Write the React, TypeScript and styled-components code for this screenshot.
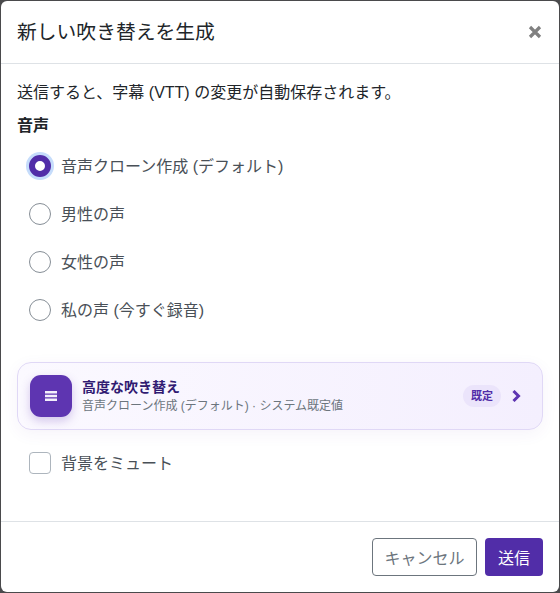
import React, { useState } from 'react';
import styled, { createGlobalStyle } from 'styled-components';

const GlobalStyle = createGlobalStyle`
  html, body {
    margin: 0;
    padding: 0;
    height: 100%;
    background: #4a4a4c;
    overflow: hidden;
  }
  #root {
    height: 100%;
  }
`;

const voices = ['音声クローン作成 (デフォルト)', '男性の声', '女性の声', '私の声 (今すぐ録音)'];

const App = () => {
  const [voice] = useState<number>(0);

  return (
    <>
      <GlobalStyle />
      <Modal>
        <Header>
          <Title>新しい吹き替えを生成</Title>
          <CloseButton aria-label="閉じる">
            <svg width="14" height="14" viewBox="0 0 14 14">
              <path d="M2 2 L12 12 M12 2 L2 12" stroke="#808080" strokeWidth="3.2" />
            </svg>
          </CloseButton>
        </Header>
        <Body>
          <Notice>送信すると、字幕 (VTT) の変更が自動保存されます。</Notice>
          <SectionLabel>音声</SectionLabel>
          <RadioList>
            {voices.map((label, i) => (
              <RadioRow key={label}>
                <RadioMark $checked={voice === i} />
                <OptionText>{label}</OptionText>
              </RadioRow>
            ))}
          </RadioList>
          <AdvancedCard>
            <AdvancedIcon>
              <svg width="12" height="10" viewBox="0 0 12 10">
                <path d="M0 0 H12 V2.4 H0 Z M0 3.8 H12 V6.2 H0 Z M0 7.6 H12 V10 H0 Z" fill="#f3effb" />
              </svg>
            </AdvancedIcon>
            <AdvancedText>
              <AdvancedTitle>高度な吹き替え</AdvancedTitle>
              <AdvancedSub>音声クローン作成 (デフォルト) · システム既定値</AdvancedSub>
            </AdvancedText>
            <DefaultBadge>既定</DefaultBadge>
            <Chevron width="9" height="12" viewBox="0 0 9 12">
              <path d="M1.5 1 L6.5 6 L1.5 11" fill="none" stroke="#5e35b1" strokeWidth="3" />
            </Chevron>
          </AdvancedCard>
          <CheckRow>
            <CheckMark />
            <OptionText>背景をミュート</OptionText>
          </CheckRow>
        </Body>
        <Footer>
          <CancelButton>キャンセル</CancelButton>
          <SubmitButton>送信</SubmitButton>
        </Footer>
      </Modal>
    </>
  );
};

export default App;

const Modal = styled.div`
  box-sizing: border-box;
  height: 591px;
  margin: 1px 1px 0;
  background: #fff;
  border-radius: 6px;
  display: flex;
  flex-direction: column;
  font-family: 'Liberation Sans', 'Noto Sans CJK JP', sans-serif;
  color: #212529;
`;

const Header = styled.div`
  height: 63px;
  flex: none;
  box-sizing: border-box;
  display: flex;
  align-items: center;
  justify-content: space-between;
  padding: 0 16px;
  border-bottom: 1px solid #dee2e6;
`;

const Title = styled.h5`
  margin: 0;
  font-size: 19.8px;
  font-weight: 400;
  line-height: 24px;
`;

const CloseButton = styled.button`
  border: 0;
  padding: 0;
  background: none;
  display: flex;
  margin-right: 1px;
`;

const Body = styled.div`
  flex: 1;
  padding: 17px 16px 0;
`;

const Notice = styled.p`
  margin: 0;
  font-size: 16px;
  line-height: 24px;
`;

const SectionLabel = styled.div`
  margin-top: 9px;
  font-size: 16px;
  font-weight: 700;
  line-height: 24px;
`;

const RadioList = styled.div`
  margin-top: 4px;
  padding-left: 12px;
  display: flex;
  flex-direction: column;
`;

const RadioRow = styled.label`
  height: 48px;
  display: flex;
  align-items: center;
  gap: 10px;
`;

const RadioMark = styled.span<{ $checked: boolean }>`
  box-sizing: border-box;
  width: 22px;
  height: 22px;
  border-radius: 50%;
  flex: none;
  background: #fff;
  border: ${(p) => (p.$checked ? '6.5px solid #512da8' : '1px solid #868e96')};
  box-shadow: ${(p) => (p.$checked ? '0 0 0 3px #c5dcfb' : 'none')};
`;

const OptionText = styled.span`
  padding-top: 2px;
  font-size: 16px;
  line-height: 24px;
  color: #495057;
`;

const AdvancedCard = styled.div`
  box-sizing: border-box;
  height: 68px;
  margin-top: 28px;
  display: flex;
  align-items: center;
  padding: 0 21px 0 12px;
  border: 1px solid #e0d8f6;
  border-radius: 14px;
  background: linear-gradient(90deg, #fbf9ff, #f4effe);
  box-shadow: 0 4px 16px rgba(94, 53, 177, 0.06);
`;

const AdvancedIcon = styled.div`
  width: 42px;
  height: 42px;
  flex: none;
  border-radius: 11px;
  background: #5e35b1;
  display: flex;
  align-items: center;
  justify-content: center;
  box-shadow: 0 4px 10px rgba(94, 53, 177, 0.25);
`;

const AdvancedText = styled.div`
  flex: 1;
  margin-left: 10px;
  padding-top: 2px;
  min-width: 0;
`;

const AdvancedTitle = styled.div`
  font-size: 14px;
  font-weight: 700;
  line-height: 18px;
  color: #311b72;
`;

const AdvancedSub = styled.div`
  margin-top: 1px;
  font-size: 12px;
  line-height: 19px;
  color: #6c757d;
`;

const DefaultBadge = styled.span`
  height: 22px;
  padding: 0 8px;
  border-radius: 11px;
  background: #ebe4fb;
  color: #512da8;
  font-size: 11px;
  font-weight: 700;
  line-height: 22px;
`;

const Chevron = styled.svg`
  margin-left: 11px;
  flex: none;
`;

const CheckRow = styled.label`
  margin-top: 20px;
  padding-left: 12px;
  display: flex;
  align-items: center;
  gap: 10px;
`;

const CheckMark = styled.span`
  box-sizing: border-box;
  width: 22px;
  height: 22px;
  border: 1px solid #adb5bd;
  border-radius: 4px;
  background: #fff;
`;

const Footer = styled.div`
  height: 71px;
  flex: none;
  box-sizing: border-box;
  border-top: 1px solid #dee2e6;
  display: flex;
  align-items: center;
  justify-content: flex-end;
  gap: 8px;
  padding: 0 16px 0 0;
`;

const CancelButton = styled.button`
  box-sizing: border-box;
  height: 38px;
  width: 105px;
  padding: 0;
  border: 1px solid #6c757d;
  border-radius: 4px;
  background: #fff;
  color: #6c757d;
  font-family: inherit;
  font-size: 16px;
`;

const SubmitButton = styled.button`
  box-sizing: border-box;
  height: 38px;
  width: 58px;
  padding: 0;
  border: 0;
  border-radius: 4px;
  background: #512da8;
  color: #fff;
  font-family: inherit;
  font-size: 16px;
`;
